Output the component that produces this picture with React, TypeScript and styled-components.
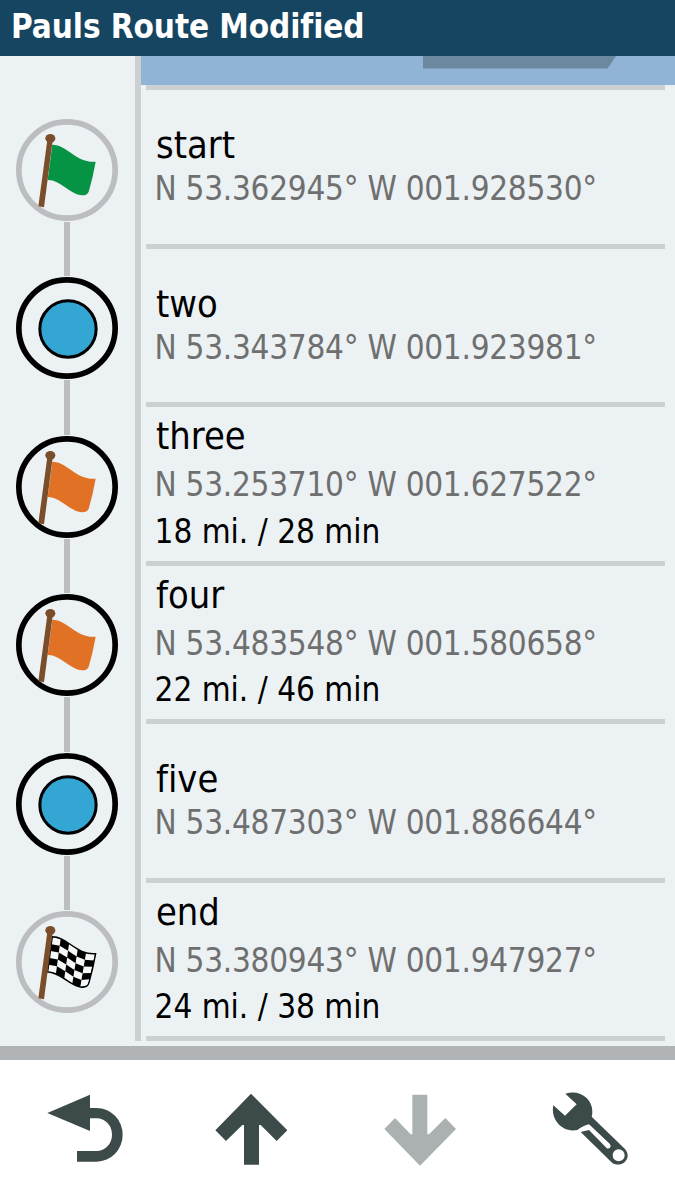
import React from 'react';
import styled, { createGlobalStyle } from 'styled-components';

const GlobalStyle = createGlobalStyle`
  *, *::before, *::after { box-sizing: border-box; }
  body { margin: 0; background: #ecf1f4; }
`;

const Screen = styled.div`
  display: flex;
  flex-direction: column;
  width: 675px;
  height: 1200px;
  overflow: hidden;
  background: #ecf1f4;
  color: #000;
  font-family: 'DejaVu Sans Condensed', 'DejaVu Sans', sans-serif;
  font-stretch: condensed;
  font-variant-ligatures: none;
`;

const TitleBar = styled.header`
  flex: none;
  height: 56px;
  padding-left: 11px;
  background: #154561;
  color: #fff;
  font-size: 33px;
  font-weight: 700;
  letter-spacing: -0.08px;
  line-height: 54px;
  white-space: nowrap;
`;

const Route = styled.main`
  flex: none;
  display: flex;
  height: 990px;
`;

const Rail = styled.div`
  flex: none;
  width: 141px;
  height: 985px;
  padding-top: 63px;
  border-right: 6px solid #cdd0d2;
  display: flex;
  flex-direction: column;
`;

const MarkerSvg = styled.svg`
  flex: none;
  display: block;
  width: 102px;
  height: 102px;
  margin-left: 16px;
`;

const Connector = styled.div`
  flex: none;
  width: 6px;
  height: 54.45px;
  margin: 1px 0 1px 64px;
  background: #bcbdbf;
`;

const List = styled.div`
  flex: 1;
  min-width: 0;
`;

const Banner = styled.div`
  height: 29px;
  background: #91b3d6;
`;

const BannerArrow = styled.div`
  width: 193px;
  height: 12.5px;
  margin-left: 282px;
  background: #6c889f;
  clip-path: polygon(0 0, 100% 0, 184.5px 100%, 0 100%);
`;

const Stops = styled.div`
  margin: 0 10.5px 0 4.5px;
  border-top: 5.6px solid #cdd0d2;
`;

const Stop = styled.section<{ $compact: boolean }>`
  height: 158.5px;
  padding: ${(p) => (p.$compact ? '32.1px' : '6px')} 0 0 9px;
  border-bottom: 5px solid #cdd0d2;
  white-space: nowrap;
`;

const StopName = styled.div<{ $compact: boolean }>`
  margin-bottom: ${(p) => (p.$compact ? '0' : '3.2px')};
  padding-left: 1.5px;
  font-size: 37.7px;
  line-height: 46px;
`;

const Coordinates = styled.div<{ $compact: boolean }>`
  color: #6f6f6f;
  font-size: 33px;
  letter-spacing: -0.27px;
  line-height: ${(p) => (p.$compact ? '42px' : '46.4px')};
`;

const Leg = styled.div`
  font-size: 33px;
  line-height: 46.4px;
`;

const Toolbar = styled.footer`
  flex: 1;
  display: grid;
  grid-template-columns: 180px 142.33px 194.67px 155px;
  border-top: 14px solid #b0b4b7;
  background: #fff;
`;

const ToolButton = styled.button<{ $dim?: boolean }>`
  display: flex;
  padding: 20px 0 0;
  justify-content: center;
  align-items: flex-start;
  border: 0;
  background: none;
  color: ${(p) => (p.$dim ? '#abb1b1' : '#3c4a4a')};
`;

const ToolIcon = styled.svg`
  flex: none;
  display: block;
  fill: currentColor;
`;

type Kind = 'start' | 'shape' | 'via' | 'end';

interface RouteStop {
  name: string;
  coordinates: string;
  leg?: string;
  kind: Kind;
}

const stops: RouteStop[] = [
  { name: 'start', coordinates: 'N 53.362945° W 001.928530°', kind: 'start' },
  { name: 'two', coordinates: 'N 53.343784° W 001.923981°', kind: 'shape' },
  { name: 'three', coordinates: 'N 53.253710° W 001.627522°', leg: '18 mi. / 28 min', kind: 'via' },
  { name: 'four', coordinates: 'N 53.483548° W 001.580658°', leg: '22 mi. / 46 min', kind: 'via' },
  { name: 'five', coordinates: 'N 53.487303° W 001.886644°', kind: 'shape' },
  { name: 'end', coordinates: 'N 53.380943° W 001.947927°', leg: '24 mi. / 38 min', kind: 'end' },
];

const clothPath =
  'M157 134 C202 134 229 190 287 185 Q279 230 267 272 Q263 287 245 286 C210 283 178 238 143 240 Z';

// Points along the upper and lower hem of the chequered flag.
const upperHem = [[157, 136], [182, 141], [207, 156], [233, 173], [258, 183], [285, 187]];
const lowerHem = [[143, 239], [168, 243], [193, 258], [217, 275], [241, 284], [264, 280]];

const hemPoint = (col: number, row: number) => {
  const t = row / 5;
  const [ax, ay] = upperHem[col];
  const [bx, by] = lowerHem[col];
  return `${ax + (bx - ax) * t},${ay + (by - ay) * t}`;
};

const whiteCells: string[] = [];
for (let col = 0; col < 5; col++) {
  for (let row = 0; row < 5; row++) {
    if ((col + row) % 2 === 0) {
      whiteCells.push(
        [hemPoint(col, row), hemPoint(col + 1, row), hemPoint(col + 1, row + 1), hemPoint(col, row + 1)].join(' ')
      );
    }
  }
}

const clothColor: Record<Kind, string> = {
  start: '#049444',
  shape: 'none',
  via: '#e17124',
  end: '#000',
};

function Marker({ kind }: { kind: Kind }) {
  const endpoint = kind === 'start' || kind === 'end';
  return (
    <MarkerSvg viewBox="48 57 306 306">
      <circle cx="201" cy="210" r="144.5" fill="none" stroke={endpoint ? '#bcbdc1' : '#000'} strokeWidth="17" />
      {kind === 'shape' ? (
        <circle cx="204" cy="213" r="84.5" fill="#34a6d3" stroke="#000" strokeWidth="9" />
      ) : (
        <>
          <path d={clothPath} fill={clothColor[kind]} />
          {kind === 'end' && (
            <>
              {whiteCells.map((points) => (
                <polygon key={points} points={points} fill="#f6f8f8" />
              ))}
              <path d={clothPath} fill="none" stroke="#000" strokeWidth="4" />
            </>
          )}
          <path d="M142 120 L158 122 L132 322 L115 319 Z" fill="#7a4e2b" />
          <ellipse cx="151" cy="115" rx="15" ry="13" fill="#7a4e2b" />
        </>
      )}
    </MarkerSvg>
  );
}

export default function App() {
  return (
    <>
      <GlobalStyle />
      <Screen>
        <TitleBar>Pauls Route Modified</TitleBar>
        <Route>
          <Rail>
            {stops.map((stop, i) => (
              <React.Fragment key={stop.name}>
                {i > 0 && <Connector />}
                <Marker kind={stop.kind} />
              </React.Fragment>
            ))}
          </Rail>
          <List>
            <Banner>
              <BannerArrow />
            </Banner>
            <Stops>
              {stops.map((stop) => (
                <Stop key={stop.name} $compact={!stop.leg}>
                  <StopName $compact={!stop.leg}>{stop.name}</StopName>
                  <Coordinates $compact={!stop.leg}>{stop.coordinates}</Coordinates>
                  {stop.leg && <Leg>{stop.leg}</Leg>}
                </Stop>
              ))}
            </Stops>
          </List>
        </Route>
        <Toolbar>
          <ToolButton aria-label="Back">
            <ToolIcon width="120" height="100" viewBox="0 0 360 300">
              <path d="M52 99 L180 44 V84 H200 A78 80.5 0 0 1 200 245 H141 V213 H200 A46 49 0 0 0 200 115 H180 V153 Z" />
            </ToolIcon>
          </ToolButton>
          <ToolButton aria-label="Up">
            <ToolIcon width="90" height="100" viewBox="20 0 270 300">
              <path d="M155 41 L264 151 L232 183 L184 135 H179 V254 H134 V135 H129 L80 183 L48 151 Z" />
            </ToolIcon>
          </ToolButton>
          <ToolButton aria-label="Down" $dim>
            <ToolIcon width="90" height="100" viewBox="527 0 270 300">
              <path d="M662 257 L770 147 L738 114 L689 163 H684 V44 H639 V163 H634 L587 114 L555 147 Z" />
            </ToolIcon>
          </ToolButton>
          <ToolButton aria-label="Settings">
            <ToolIcon width="110" height="100" viewBox="0 0 330 300">
              <path
                fillRule="evenodd"
                d="M79 41 C122 28 160 55 160 95 Q160 104 158 110 L258 207 C281 235 250 265 220 249 L125 156 L150 150 L202 203 Q208 209 214 202 Q217 197 212 191 L150 133 Q128 139 115 150 C70 160 34 118 43 76 L78 107 L113 73 Z M239 208 A18 18 0 1 0 239 244 A18 18 0 1 0 239 208 Z"
              />
            </ToolIcon>
          </ToolButton>
        </Toolbar>
      </Screen>
    </>
  );
}
